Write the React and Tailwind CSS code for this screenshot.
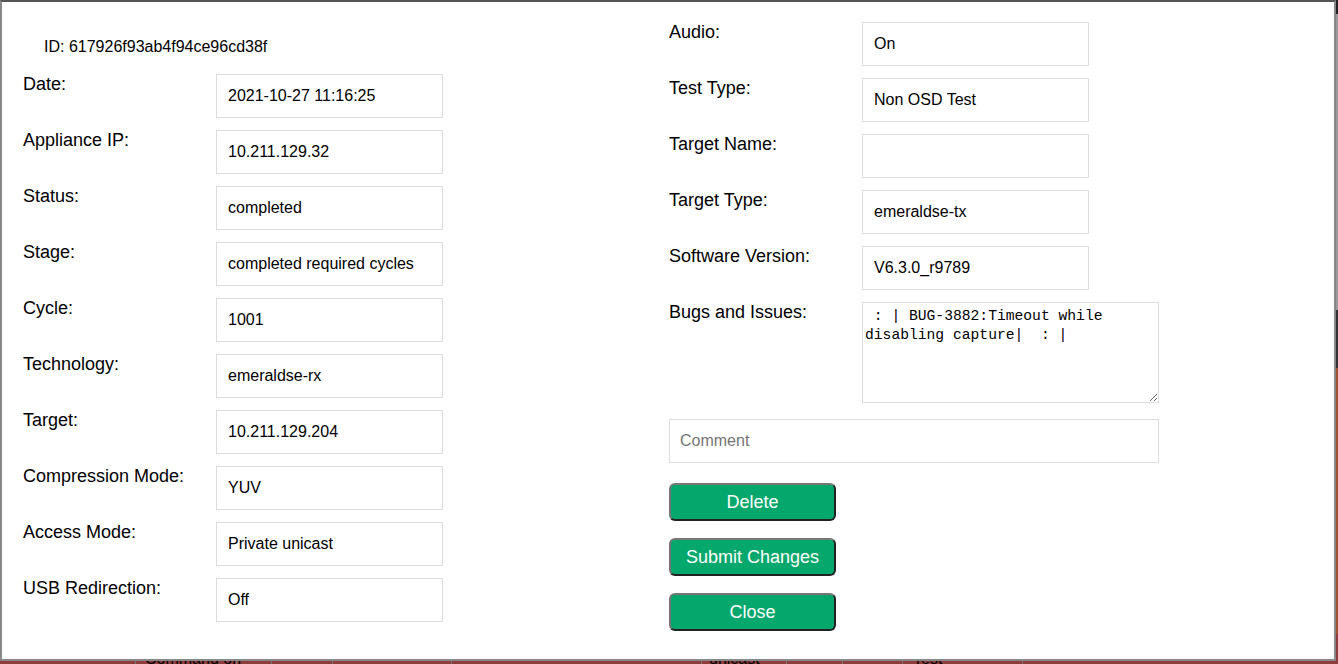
import React from "react";

const leftRows = [
  ["Date:", "2021-10-27 11:16:25"],
  ["Appliance IP:", "10.211.129.32"],
  ["Status:", "completed"],
  ["Stage:", "completed required cycles"],
  ["Cycle:", "1001"],
  ["Technology:", "emeraldse-rx"],
  ["Target:", "10.211.129.204"],
  ["Compression Mode:", "YUV"],
  ["Access Mode:", "Private unicast"],
  ["USB Redirection:", "Off"],
];

const rightRows = [
  ["Audio:", "On"],
  ["Test Type:", "Non OSD Test"],
  ["Target Name:", ""],
  ["Target Type:", "emeraldse-tx"],
  ["Software Version:", "V6.3.0_r9789"],
];

export default function App() {
  return (
    <div className="relative w-[1338px] h-[664px] overflow-hidden font-['Liberation_Sans',Arial,sans-serif] text-black">
      {/* page behind the dialog */}
      <div className="flex flex-col h-full">
        <div className="h-[14px] bg-[#222]"></div>
        <div className="h-[296px] bg-[#9a9a9a]"></div>
        <div className="h-[58px] bg-[#333]"></div>
        <div className="flex-1 bg-[#a0522d]"></div>
        <div className="h-[30px] bg-[#8e3c3c] flex text-[16px] leading-[30px] pt-[10px] whitespace-nowrap">
          <div className="w-[136px] border-r border-[#777]"></div>
          <div className="w-[101px] border-r border-[#777] pl-[9px]">Command on</div>
          <div className="w-[35px] border-r border-[#777]"></div>
          <div className="w-[61px] border-r border-[#777]"></div>
          <div className="w-[119px] border-r border-[#777]"></div>
          <div className="w-[250px] border-r border-[#777]"></div>
          <div className="w-[85px] border-r border-[#777] pl-[7px]">unicast</div>
          <div className="w-[56px] border-r border-[#777]"></div>
          <div className="w-[60px] border-r border-[#777]"></div>
          <div className="w-[120px] border-r border-[#777] pl-[10px]">Test</div>
          <div className="flex-1"></div>
        </div>
      </div>

      {/* dialog */}
      <div className="absolute left-0 top-0 w-[1336px] h-[661px] bg-white border-2 border-[#888] border-t-[#555] pl-[21px] pt-[20px] flex">
        {/* left column */}
        <div className="w-[646px]">
          <div className="h-[52px] pt-[16px] pl-[21px] text-[16px] leading-[18px]">
            ID: 617926f93ab4f94ce96cd38f
          </div>
          {leftRows.map(([label, value]) => (
            <Row key={label} label={label} value={value} />
          ))}
        </div>

        {/* right column */}
        <div className="flex-1">
          {rightRows.map(([label, value]) => (
            <Row key={label} label={label} value={value} />
          ))}
          <div className="flex items-start">
            <div className="w-[193px] text-[18px] leading-[18px] pt-[1px]">Bugs and Issues:</div>
            <textarea
              readOnly
              value={" : | BUG-3882:Timeout while disabling capture|  : |"}
              className="w-[297px] h-[101px] border border-[#ddd] px-[2px] pt-[4px] font-['Liberation_Mono',monospace] text-[14.67px] leading-[19px] text-black outline-none"
            />
          </div>
          <input
            placeholder="Comment"
            className="mt-[16px] block w-[490px] h-[44px] border border-[#ddd] px-[10px] text-[16px] outline-none placeholder:text-[#757575]"
          />
          <div className="mt-[20px] flex flex-col gap-[17px]">
            <GreenButton>Delete</GreenButton>
            <GreenButton>Submit Changes</GreenButton>
            <GreenButton>Close</GreenButton>
          </div>
        </div>
      </div>
    </div>
  );
}

function Row({ label, value }) {
  return (
    <div className="flex items-start mb-[12px]">
      <div className="w-[193px] text-[18px] leading-[18px] pt-[1px]">{label}</div>
      <div className="w-[227px] h-[44px] border border-[#ddd] px-[11px] pt-[12px] text-[16px] leading-[18px]">
        {value}
      </div>
    </div>
  );
}

function GreenButton({ children }) {
  return (
    <button className="w-[167px] h-[38px] rounded-[6px] bg-[#04a76c] text-white text-[18px] border-2 border-t-[#777] border-l-[#777] border-b-[#222] border-r-[#222]">
      {children}
    </button>
  );
}
